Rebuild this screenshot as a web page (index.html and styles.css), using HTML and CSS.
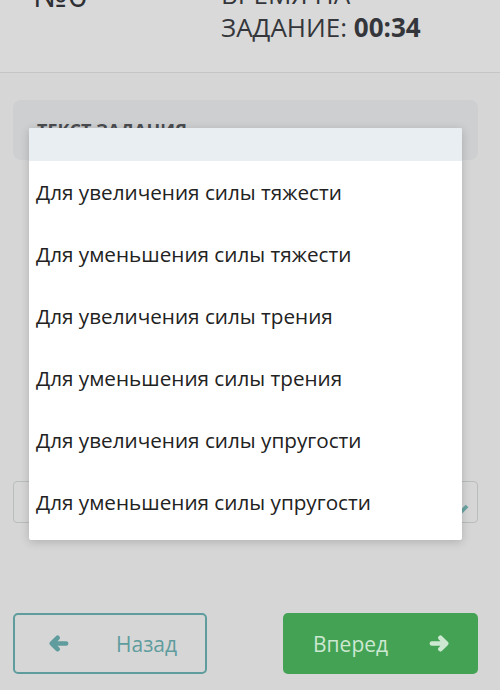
FILE: index.html
```html
<!DOCTYPE html>
<html lang="ru">
  <head>
    <meta charset="UTF-8" />
    <meta name="viewport" content="width=device-width, initial-scale=1.0" />
    <title>Задание</title>
    <link rel="stylesheet" href="styles.css">
  </head>
  <body>
    <header class="top-bar">
      <div class="task-num">№6</div>
      <div class="timer">
        <div>ВРЕМЯ НА</div>
        <div>ЗАДАНИЕ: <strong>00:34</strong></div>
      </div>
    </header>
    <main class="content">
      <section class="task-card">
        <h2 class="task-title">ТЕКСТ ЗАДАНИЯ</h2>
      </section>
      <div class="answer-field">
        <svg class="pencil" viewBox="0 0 16 16" width="14" height="14">
          <path d="M2 11 L10 3 L13 6 L5 14 L2 14 Z" fill="#6aa3a3" />
        </svg>
      </div>
      <nav class="nav-buttons">
        <button class="btn btn-back">
          <svg viewBox="0 0 22 18" width="21" height="17">
            <path d="M4 9 H19 M10 3 L4 9 L10 15" fill="none" stroke="currentColor" stroke-width="5" stroke-linecap="round" stroke-linejoin="round" />
          </svg>
          <span>Назад</span>
        </button>
        <button class="btn btn-next">
          <span>Вперед</span>
          <svg viewBox="0 0 22 18" width="21" height="17">
            <path d="M3 9 H18 M12 3 L18 9 L12 15" fill="none" stroke="currentColor" stroke-width="5" stroke-linecap="round" stroke-linejoin="round" />
          </svg>
        </button>
      </nav>
    </main>

    <!-- open select list -->
    <div class="dropdown">
      <div class="dropdown-head"></div>
      <ul class="options">
        <li>Для увеличения силы тяжести</li>
        <li>Для уменьшения силы тяжести</li>
        <li>Для увеличения силы трения</li>
        <li>Для уменьшения силы трения</li>
        <li>Для увеличения силы упругости</li>
        <li>Для уменьшения силы упругости</li>
      </ul>
    </div>
  </body>
</html>
```

FILE: styles.css
```css
body {
  margin: 0;
  font-family: "Open Sans", "DejaVu Sans", sans-serif;
  background-color: #d6d6d6;
  color: #2e3035;
}
.top-bar {
  height: 72px;
  display: flex;
  background-color: #d9d9d9;
  border-bottom: 1px solid #c5c5c5;
  overflow: hidden;
}
.task-num {
  margin-top: -26px;
  padding-left: 33px;
  font-size: 34px;
  line-height: 40px;
  width: 188px;
}
.timer {
  margin-top: -22px;
  font-size: 26px;
  line-height: 33px;
  color: #34363b;
}
.timer strong {
  font-weight: 700;
}
.content {
  padding: 27px 22px 0 13px;
}
.task-card {
  height: 60px;
  background-color: #cdcfd0;
  border-radius: 8px;
  padding: 0 24px;
  overflow: hidden;
}
.task-title {
  margin: 0;
  padding-top: 18px;
  font-size: 18px;
  font-weight: 700;
  color: #4a4c50;
}
.answer-field {
  margin-top: 321px;
  height: 40px;
  border: 1px solid #babdbe;
  border-radius: 4px;
  display: flex;
  align-items: center;
  justify-content: flex-end;
  padding-right: 6px;
}
.pencil {
  margin-top: 14px;
}
.nav-buttons {
  margin-top: 90px;
  display: flex;
  justify-content: space-between;
}
.btn {
  box-sizing: border-box;
  width: 195px;
  height: 61px;
  border-radius: 5px;
  font-family: inherit;
  font-size: 21px;
  display: flex;
  align-items: center;
  padding: 0;
}
.btn-back {
  width: 194px;
  border: 2px solid #5f9c9d;
  background: transparent;
  color: #5f9c9d;
  padding-left: 33px;
  gap: 47px;
}
.btn-next {
  border: none;
  background-color: #43a254;
  color: #cde8d1;
  padding-left: 30px;
  gap: 41px;
}
.dropdown {
  position: absolute;
  top: 128px;
  left: 29px;
  width: 433px;
  height: 412px;
  background-color: #ffffff;
  border-radius: 2px;
  box-shadow: 0 2px 10px rgba(0, 0, 0, 0.18);
  overflow: hidden;
}
.dropdown-head {
  height: 33px;
  background-color: #e8eef1;
}
.options {
  list-style: none;
  margin: 0;
  padding: 0;
}
.options li {
  height: 62px;
  line-height: 62px;
  padding-left: 7px;
  font-size: 20.7px;
  color: #222222;
}
```
